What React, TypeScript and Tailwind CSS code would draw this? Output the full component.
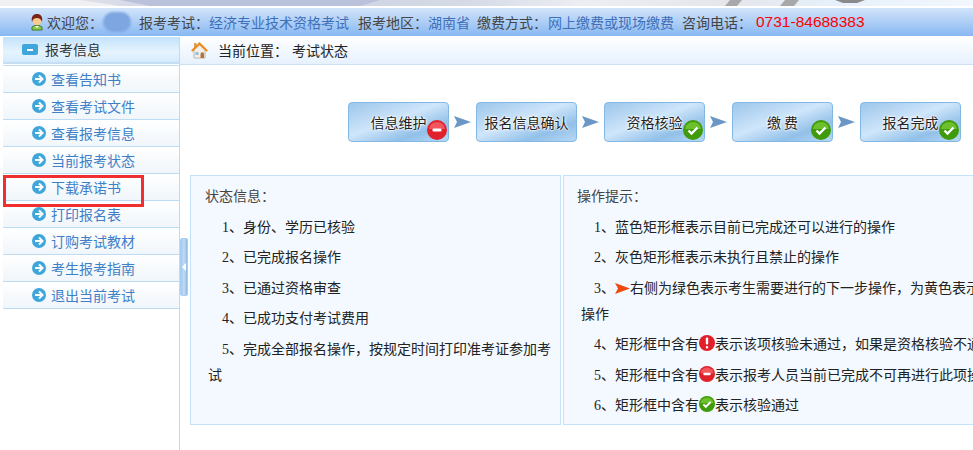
import type { ReactNode } from "react"

const menu = [
  "查看告知书",
  "查看考试文件",
  "查看报考信息",
  "当前报考状态",
  "下载承诺书",
  "打印报名表",
  "订购考试教材",
  "考生报考指南",
  "退出当前考试",
]

const PersonIcon = () => (
  <svg width="14" height="18" viewBox="0 0 14 18" className="shrink-0">
    <path d="M2 17v-3l3-1.500h4l3 1.500v3z" fill="#8ccb52" stroke="#3f7d20" strokeWidth="1" />
    <path d="M5 13l2 2 2-2z" fill="#fff" />
    <circle cx="7" cy="8" r="4.200" fill="#fbc98a" />
    <path d="M2 9C0.800 3.500 3.500 1 7 1s6.200 2.500 5 8c-.8-2.500-2.500-4-5-4S2.800 6.500 2 9z" fill="#7a2418" />
  </svg>
)

const HomeIcon = () => (
  <svg width="17" height="17" viewBox="0 0 17 17" className="shrink-0">
    <rect x="3" y="1" width="2.500" height="4" fill="#d9a05a" />
    <path d="M3 8v8h11V8L8.500 3z" fill="#f3f1e6" stroke="#a8a8a0" strokeWidth="0.8" />
    <path d="M0.800 9L8.500 1.500 16.200 9" fill="none" stroke="#ee8a1d" strokeWidth="2" />
    <path d="M9.500 16v-4a1.700 1.700 0 0 1 3.500 0v4z" fill="#b8713a" />
    <rect x="4.500" y="10" width="3" height="3" fill="#8cc0ea" />
  </svg>
)

const ArrowDot = () => (
  <svg width="14" height="14" viewBox="0 0 14 14" className="shrink-0">
    <circle cx="7" cy="7" r="7" fill="#3fa6dc" />
    <path d="M3 7h7M7 3.500L10.500 7 7 10.500" fill="none" stroke="#fff" strokeWidth="2" />
  </svg>
)

const MinusBadge = ({ size = 20 }: { size?: number }) => (
  <svg width={size} height={size} viewBox="0 0 20 20" className="shrink-0">
    <circle cx="10" cy="10" r="10" fill="#e0202a" />
    <path d="M2 9a8 7 0 0 1 16 0z" fill="#f2555c" />
    <rect x="5.500" y="8.500" width="9" height="3" rx="1" fill="#fff" />
  </svg>
)

const CheckBadge = ({ size = 20 }: { size?: number }) => (
  <svg width={size} height={size} viewBox="0 0 20 20" className="shrink-0">
    <circle cx="10" cy="10" r="10" fill="#3f9a0c" />
    <path d="M2 9a8 7 0 0 1 16 0z" fill="#6cc02c" />
    <path d="M5.500 10.500l3 3 6-6" fill="none" stroke="#fff" strokeWidth="2.400" />
  </svg>
)

const AlertBadge = () => (
  <svg width="16" height="16" viewBox="0 0 16 16" className="shrink-0">
    <circle cx="8" cy="8" r="8" fill="#e0202a" />
    <rect x="6.800" y="2.500" width="2.400" height="7" rx="1" fill="#fff" />
    <rect x="6.800" y="11" width="2.400" height="2.400" rx="1" fill="#fff" />
  </svg>
)

const StepArrow = () => (
  <svg width="17" height="12" viewBox="0 0 17 12" className="shrink-0">
    <path d="M0 0l17 6-17 6 3-6z" fill="#6a97c4" />
  </svg>
)

const Step = ({ label, badge }: { label: string; badge: ReactNode }) => (
  <div className="relative flex h-10 w-[101px] shrink-0 items-center justify-center rounded-[4px] border border-[#82b8e6] bg-[linear-gradient(160deg,#9cc6ea_0%,#cfe6fb_45%,#92c0e8_75%,#b8d8f4_100%)] text-[14px] leading-none text-[#222] [text-shadow:0_0_2px_#fff,0_0_2px_#fff,0_0_3px_#fff]">
    {label}
    <span className="absolute right-[1px] bottom-[1px]">{badge}</span>
  </div>
)

const Line = ({ children }: { children: ReactNode }) => (
  <p className="mt-[4.500px] flex items-center whitespace-nowrap pl-[17px] text-[14px] leading-[26px] text-[#222]">{children}</p>
)

const Raised = ({ children }: { children: ReactNode }) => <span className="-translate-y-[2px]">{children}</span>

const Label = ({ children }: { children: ReactNode }) => <span className="text-[#444]">{children}</span>
const Value = ({ children }: { children: ReactNode }) => <span className="text-[#3f6fb8]">{children}</span>

export default function App() {
  return (
    <div className="relative h-[450px] w-[973px] overflow-hidden bg-white font-['Liberation_Serif','Noto_Sans_CJK_SC',serif]">
      {/* top banner */}
      <div className="h-[6px] overflow-hidden bg-[linear-gradient(90deg,#e8e8ee_0%,#c9cfe0_25%,#d5dae6_48%,#eceef2_60%,#e4e6ea_75%,#e6f0fa_85%,#f2f7fc_100%)]">
        <svg width="973" height="6" viewBox="0 0 973 6">
          <path d="M0 0h80l40 6H0z" fill="#f0f0f3" />
          <path d="M120 0h260l-20 6H150z" fill="#b9c2da" />
          <path d="M725 6l5-6h12l-5 6zM780 6l5-6h14l-5 6z" fill="#a8a8aa" />
          <path d="M835 0h30l-8 3h-14z" fill="#8a8a8a" />
        </svg>
      </div>

      {/* info bar */}
      <div className="mt-[2px] flex h-[28px] items-center whitespace-nowrap bg-[linear-gradient(180deg,#d2e4fa_0%,#88b8f2_100%)] pl-[30px] font-['Noto_Sans_CJK_SC',sans-serif] text-[14px] leading-4">
        <PersonIcon />
        <span className="ml-[3px] w-[56px] text-[#444]">欢迎您：</span>
        <span className="h-5 w-[28px] rounded-full bg-[#7ea6e0] blur-[1px]" />
        <span className="ml-2 w-[70px]"><Label>报考考试：</Label></span>
        <span className="w-[149px]"><Value>经济专业技术资格考试</Value></span>
        <span className="w-[70px]"><Label>报考地区：</Label></span>
        <span className="w-[49px]"><Value>湖南省</Value></span>
        <span className="w-[71px]"><Label>缴费方式：</Label></span>
        <span className="w-[134px]"><Value>网上缴费或现场缴费</Value></span>
        <span className="w-[74px]"><Label>咨询电话：</Label></span>
        <span className="font-['Liberation_Sans',sans-serif] text-[15.500px] text-[#f00]">0731-84688383</span>
      </div>

      <div className="mt-[1px] flex h-[413px]">
        {/* sidebar */}
        <aside className="ml-[3px] w-[177px] shrink-0 border-r border-[#bcdcf4] font-['Noto_Sans_CJK_SC',sans-serif]">
          <div className="flex h-[27px] items-center border-b-2 border-[#c4def4] bg-[linear-gradient(180deg,#c2e2fb_0%,#e6f4fe_60%,#d4ebfd_100%)] pl-[19px] text-[14px] text-[#333]">
            <span className="flex h-[11px] w-4 items-center justify-center rounded-[2px] bg-[#3fa6dc]">
              <span className="h-[2px] w-[6px] bg-white" />
            </span>
            <span className="ml-[7px]">报考信息</span>
          </div>
          <ul className="mt-[1px] border-t border-[#c4def4]">
            {menu.map((item) => (
              <li
                key={item}
                className="relative flex h-[27px] items-center gap-[5px] border-b border-[#bcdcf4] bg-[linear-gradient(180deg,#ffffff_0%,#f0f6fb_100%)] pl-[29px] text-[14px] text-[#3f7fc8]"
              >
                <ArrowDot />
                {item}
              </li>
            ))}
          </ul>
        </aside>

        {/* main area */}
        <main className="relative min-w-0 flex-1">
          {/* collapse handle */}
          <div className="absolute top-[201px] left-0 flex h-[58px] w-2 items-center justify-center rounded-[2px] border border-[#a8cdf0] bg-[linear-gradient(90deg,#a4c8ee,#c0dcf6,#90bce8)]">
            <span className="h-0 w-0 border-y-[4px] border-r-[4px] border-y-transparent border-r-white" />
          </div>

          <div className="flex h-[28px] items-center border-b border-[#cfe0f2] bg-[linear-gradient(180deg,#ffffff_0%,#e6f1fe_100%)] pl-[11px] font-['Noto_Sans_CJK_SC',sans-serif] text-[14px] text-[#222]">
            <HomeIcon />
            <span className="ml-[10px] w-[74px]">当前位置：</span>
            <span>考试状态</span>
          </div>

          {/* steps */}
          <div className="mt-[37px] flex items-center gap-[5px] pl-[168px] font-['Noto_Sans_CJK_SC',sans-serif]">
            <Step label="信息维护" badge={<MinusBadge />} />
            <StepArrow />
            <Step label="报名信息确认" badge={null} />
            <StepArrow />
            <Step label="资格核验" badge={<CheckBadge />} />
            <StepArrow />
            <Step label="缴 费" badge={<CheckBadge />} />
            <StepArrow />
            <Step label="报名完成" badge={<CheckBadge />} />
          </div>

          {/* panels */}
          <div className="mt-[33px] flex gap-[2px] pl-[10px]">
            <section className="h-[250px] w-[371px] shrink-0 border border-[#c4e2fa] bg-[#f3f9fe] px-[14px] pt-[8px]">
              <p className="text-[14px] leading-[26px] text-[#444]">状态信息：</p>
              <Line>1、身份、学历已核验</Line>
              <Line>2、已完成报名操作</Line>
              <Line>3、已通过资格审查</Line>
              <Line>4、已成功支付考试费用</Line>
              <Line>5、完成全部报名操作，按规定时间打印准考证参加考</Line>
              <p className="pl-[3px] text-[14px] leading-[26px] text-[#222]">试</p>
            </section>
            <section className="h-[250px] w-[430px] shrink-0 border border-[#c4e2fa] bg-[#f3f9fe] px-[13px] pt-[8px]">
              <p className="text-[14px] leading-[26px] text-[#444]">操作提示：</p>
              <Line>1、蓝色矩形框表示目前已完成还可以进行的操作</Line>
              <Line>2、灰色矩形框表示未执行且禁止的操作</Line>
              <Line>
                3、
                <svg width="15" height="11" viewBox="0 0 15 11" className="shrink-0">
                  <path d="M0 0l15 5.500L0 11l3-5.500z" fill="#ee4a0c" />
                </svg>
                右侧为绿色表示考生需要进行的下一步操作，为黄色表示考生
              </Line>
              <p className="pl-[4px] text-[14px] leading-[26px] text-[#222]">操作</p>
              <Line>
                4、矩形框中含有
                <Raised><AlertBadge /></Raised>
                表示该项核验未通过，如果是资格核验不通过
              </Line>
              <Line>
                5、矩形框中含有
                <Raised><MinusBadge size={16} /></Raised>
                表示报考人员当前已完成不可再进行此项操作
              </Line>
              <Line>
                6、矩形框中含有
                <Raised><CheckBadge size={16} /></Raised>
                表示核验通过
              </Line>
            </section>
          </div>
        </main>
      </div>

      {/* highlight drawn over the screenshot */}
      <div className="absolute top-[175px] left-[3px] h-[32px] w-[141px] border-[3px] border-[#f03030]" />
    </div>
  )
}
